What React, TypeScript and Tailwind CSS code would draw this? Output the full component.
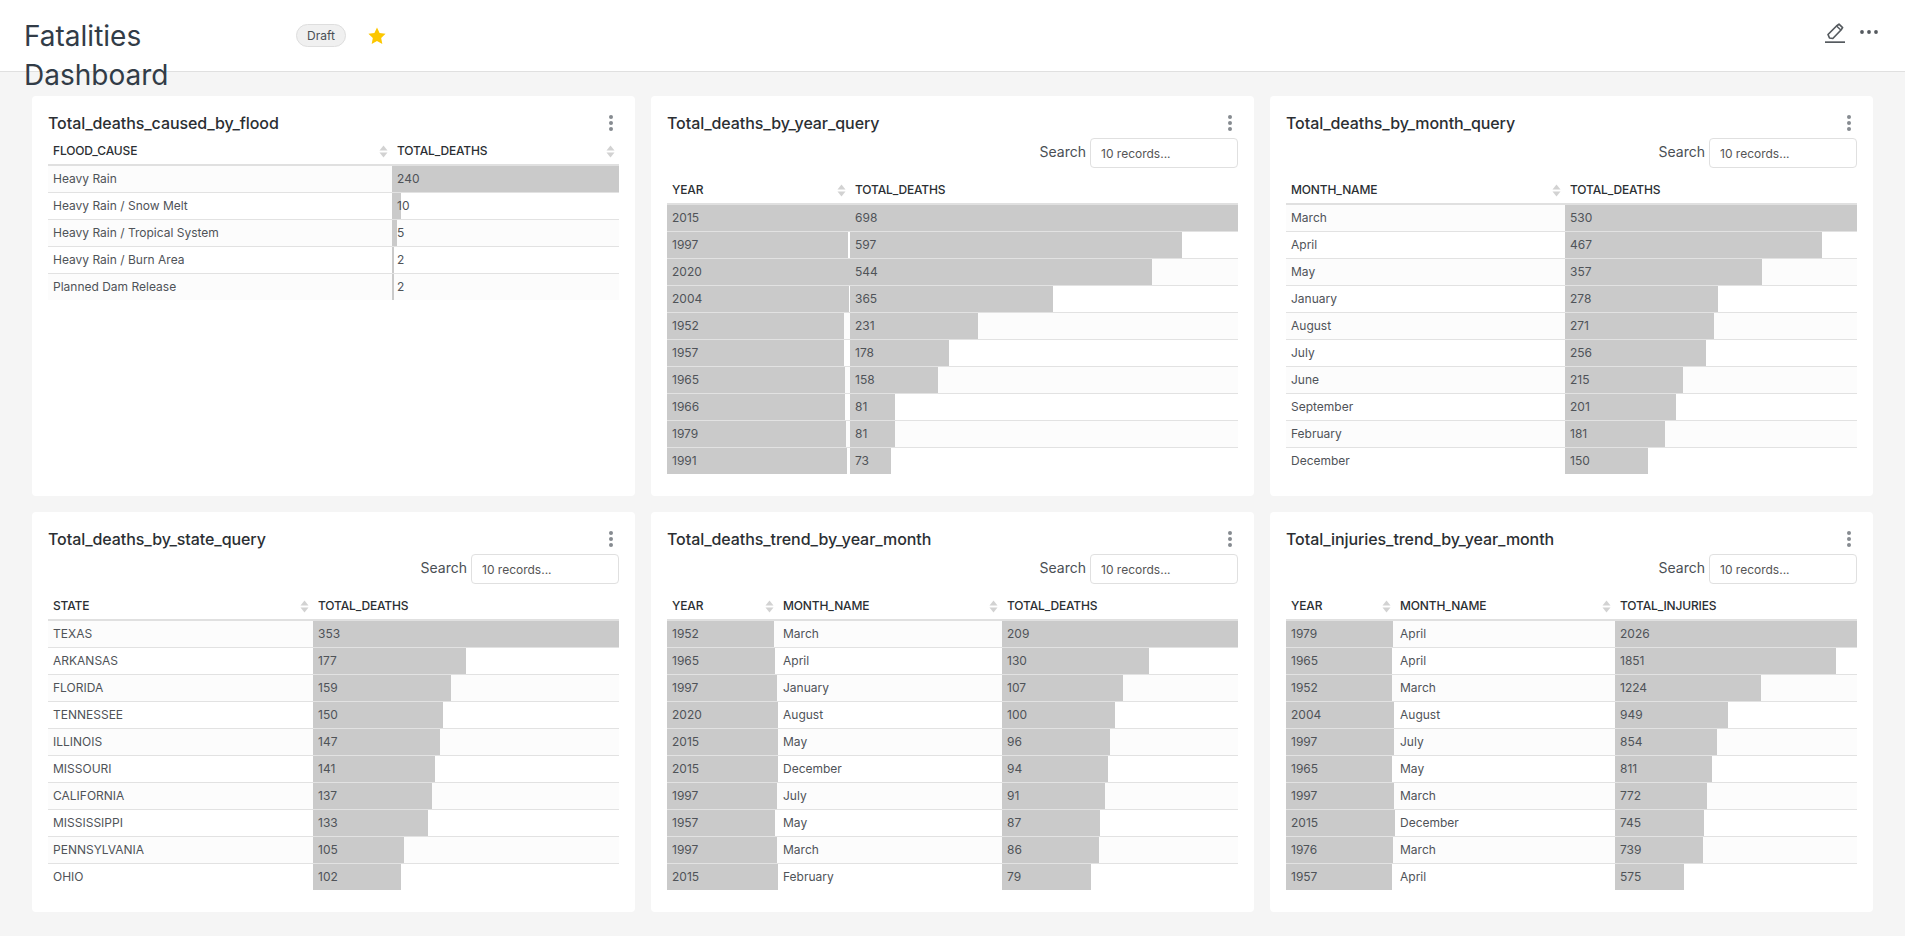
import React from "react";

type Cell = string | number;
type Column = { name: string; bar?: boolean; sort?: boolean; width: number };
type Panel = { title: string; search: boolean; grid: string; columns: Column[]; rows: Cell[][] };

const panels: Panel[] = [
  {
    title: "Total_deaths_caused_by_flood",
    search: false,
    grid: "grid grid-cols-[344px_227px]",
    columns: [
      { name: "FLOOD_CAUSE", sort: true, width: 344 },
      { name: "TOTAL_DEATHS", bar: true, sort: true, width: 227 },
    ],
    rows: [
      ["Heavy Rain", 240],
      ["Heavy Rain / Snow Melt", 10],
      ["Heavy Rain / Tropical System", 5],
      ["Heavy Rain / Burn Area", 2],
      ["Planned Dam Release", 2],
    ],
  },
  {
    title: "Total_deaths_by_year_query",
    search: true,
    grid: "grid grid-cols-[183px_388px]",
    columns: [
      { name: "YEAR", bar: true, sort: true, width: 183 },
      { name: "TOTAL_DEATHS", bar: true, width: 388 },
    ],
    rows: [
      [2015, 698],
      [1997, 597],
      [2020, 544],
      [2004, 365],
      [1952, 231],
      [1957, 178],
      [1965, 158],
      [1966, 81],
      [1979, 81],
      [1991, 73],
    ],
  },
  {
    title: "Total_deaths_by_month_query",
    search: true,
    grid: "grid grid-cols-[279px_292px]",
    columns: [
      { name: "MONTH_NAME", sort: true, width: 279 },
      { name: "TOTAL_DEATHS", bar: true, width: 292 },
    ],
    rows: [
      ["March", 530],
      ["April", 467],
      ["May", 357],
      ["January", 278],
      ["August", 271],
      ["July", 256],
      ["June", 215],
      ["September", 201],
      ["February", 181],
      ["December", 150],
    ],
  },
  {
    title: "Total_deaths_by_state_query",
    search: true,
    grid: "grid grid-cols-[265px_306px]",
    columns: [
      { name: "STATE", sort: true, width: 265 },
      { name: "TOTAL_DEATHS", bar: true, width: 306 },
    ],
    rows: [
      ["TEXAS", 353],
      ["ARKANSAS", 177],
      ["FLORIDA", 159],
      ["TENNESSEE", 150],
      ["ILLINOIS", 147],
      ["MISSOURI", 141],
      ["CALIFORNIA", 137],
      ["MISSISSIPPI", 133],
      ["PENNSYLVANIA", 105],
      ["OHIO", 102],
    ],
  },
  {
    title: "Total_deaths_trend_by_year_month",
    search: true,
    grid: "grid grid-cols-[111px_224px_236px]",
    columns: [
      { name: "YEAR", bar: true, sort: true, width: 111 },
      { name: "MONTH_NAME", sort: true, width: 224 },
      { name: "TOTAL_DEATHS", bar: true, width: 236 },
    ],
    rows: [
      [1952, "March", 209],
      [1965, "April", 130],
      [1997, "January", 107],
      [2020, "August", 100],
      [2015, "May", 96],
      [2015, "December", 94],
      [1997, "July", 91],
      [1957, "May", 87],
      [1997, "March", 86],
      [2015, "February", 79],
    ],
  },
  {
    title: "Total_injuries_trend_by_year_month",
    search: true,
    grid: "grid grid-cols-[109px_220px_242px]",
    columns: [
      { name: "YEAR", bar: true, sort: true, width: 109 },
      { name: "MONTH_NAME", sort: true, width: 220 },
      { name: "TOTAL_INJURIES", bar: true, width: 242 },
    ],
    rows: [
      [1979, "April", 2026],
      [1965, "April", 1851],
      [1952, "March", 1224],
      [2004, "August", 949],
      [1997, "July", 854],
      [1965, "May", 811],
      [1997, "March", 772],
      [2015, "December", 745],
      [1976, "March", 739],
      [1957, "April", 575],
    ],
  },
];

function SortIcon() {
  return (
    <svg width="9" height="13" viewBox="0 0 9 13" className="shrink-0" fill="#d2d2d2">
      <path d="M4.5 0.5 L8.5 5.5 H0.5 Z" />
      <path d="M4.5 12.5 L0.5 7.5 H8.5 Z" />
    </svg>
  );
}

function MoreIcon() {
  return (
    <svg width="6" height="18" viewBox="0 0 6 18" fill="#868b90">
      <circle cx="3" cy="3" r="2" />
      <circle cx="3" cy="9" r="2" />
      <circle cx="3" cy="15" r="2" />
    </svg>
  );
}

function PanelCard({ panel }: { panel: Panel }) {
  const maxes = panel.columns.map((_, i) =>
    Math.max(...panel.rows.map((r) => (typeof r[i] === "number" ? (r[i] as number) : 0)))
  );
  return (
    <section className="h-[400px] rounded-[4px] bg-white p-4">
      <div className="mb-[4px] flex h-[22px] items-center justify-between">
        <h2 className="text-[16px] font-medium leading-[22px] tracking-[-0.08px] text-[#2b2f33]">{panel.title}</h2>
        <div className="flex w-[16px] justify-center">
          <MoreIcon />
        </div>
      </div>
      {panel.search && (
        <div className="flex h-[30px] items-center justify-end gap-[4px]">
          <span className="mb-[2px] text-[14px] leading-[20px] text-[#4a4f55]">Search</span>
          <input
            readOnly
            placeholder="10 records..."
            className="h-[30px] w-[148px] rounded-[4px] border border-[#e0e0e0] bg-white px-[10px] text-[12px] text-[#555] placeholder:text-[#555] outline-none"
          />
        </div>
      )}
      <div className={panel.search ? "mt-[9px]" : ""}>
        <div className={`${panel.grid} h-[28px] border-b-2 border-[#e0e0e0]`}>
          {panel.columns.map((c) => (
            <div key={c.name} className="flex h-[26px] items-center justify-between pl-[5px] pr-[4px]">
              <span className="text-[12px] font-medium tracking-[-0.15px] text-[#2b2f33]">{c.name}</span>
              {c.sort && <SortIcon />}
            </div>
          ))}
        </div>
        {panel.rows.map((row, ri) => (
          <div
            key={ri}
            className={`${panel.grid} ${ri % 2 === 0 ? "bg-[#fcfcfc]" : "bg-white"} ${
              ri === panel.rows.length - 1 ? "h-[26px]" : "h-[27px] border-b border-[#e2e2e2]"
            }`}
          >
            {row.map((v, ci) => {
              const col = panel.columns[ci];
              const w = col.bar ? ((v as number) / maxes[ci]) * col.width : 0;
              return (
                <div
                  key={ci}
                  className="flex h-[26px] items-center pl-[5px] text-[12px] text-[#4f5358]"
                  style={
                    col.bar
                      ? { background: `linear-gradient(to right, #cacaca ${w}px, transparent ${w}px)` }
                      : undefined
                  }
                >
                  {v}
                </div>
              );
            })}
          </div>
        ))}
      </div>
    </section>
  );
}

export default function App() {
  return (
    <div className="min-h-[936px] bg-[#f5f5f5] font-['Inter',sans-serif]">
      <header className="flex h-[72px] items-start justify-between border-b border-[#e0e0e0] bg-white pl-6 pr-[27px]">
        <div className="flex items-start">
          <h1 className="relative z-10 mt-[17px] w-[272px] pr-[100px] text-[28px] font-normal leading-[39px] text-[#323c47]">
            Fatalities Dashboard
          </h1>
          <span className="mt-[24px] flex h-[23px] w-[50px] items-center justify-center rounded-full border border-[#dedede] bg-[#f0f0f0] text-[12px] text-[#4a4f55]">
            Draft
          </span>
          <svg width="20" height="20" viewBox="0 0 24 24" className="ml-[21px] mt-[26px]" fill="#fcc700">
            <path d="M12 1.8l3.1 6.6 7.2.9-5.3 5 1.4 7.2L12 18l-6.4 3.5L7 14.3l-5.3-5 7.2-.9z" />
          </svg>
        </div>
        <div className="mt-[23px] flex items-start gap-[15px]">
          <svg width="20" height="20" viewBox="0 0 20 20" fill="none" stroke="#555a5f">
            <path d="M4.5 15 L3 11.5 L11.5 3 L14 1.2 L17.6 4.6 L16 7 L7.8 15.5 Z" strokeWidth="1.7" strokeLinejoin="round" />
            <path d="M11.8 3.2 L15.8 7" strokeWidth="1.4" />
            <path d="M0 19.2 H20" strokeWidth="1.8" />
          </svg>
          <svg width="18" height="4" viewBox="0 0 18 4" className="mt-[7px]" fill="#555a5f">
            <circle cx="2" cy="2" r="1.9" />
            <circle cx="9" cy="2" r="1.9" />
            <circle cx="16" cy="2" r="1.9" />
          </svg>
        </div>
      </header>
      <main className="grid grid-cols-[603px_603px_603px] gap-4 px-8 pt-6 pb-6">
        {panels.map((p) => (
          <PanelCard key={p.title} panel={p} />
        ))}
      </main>
    </div>
  );
}
